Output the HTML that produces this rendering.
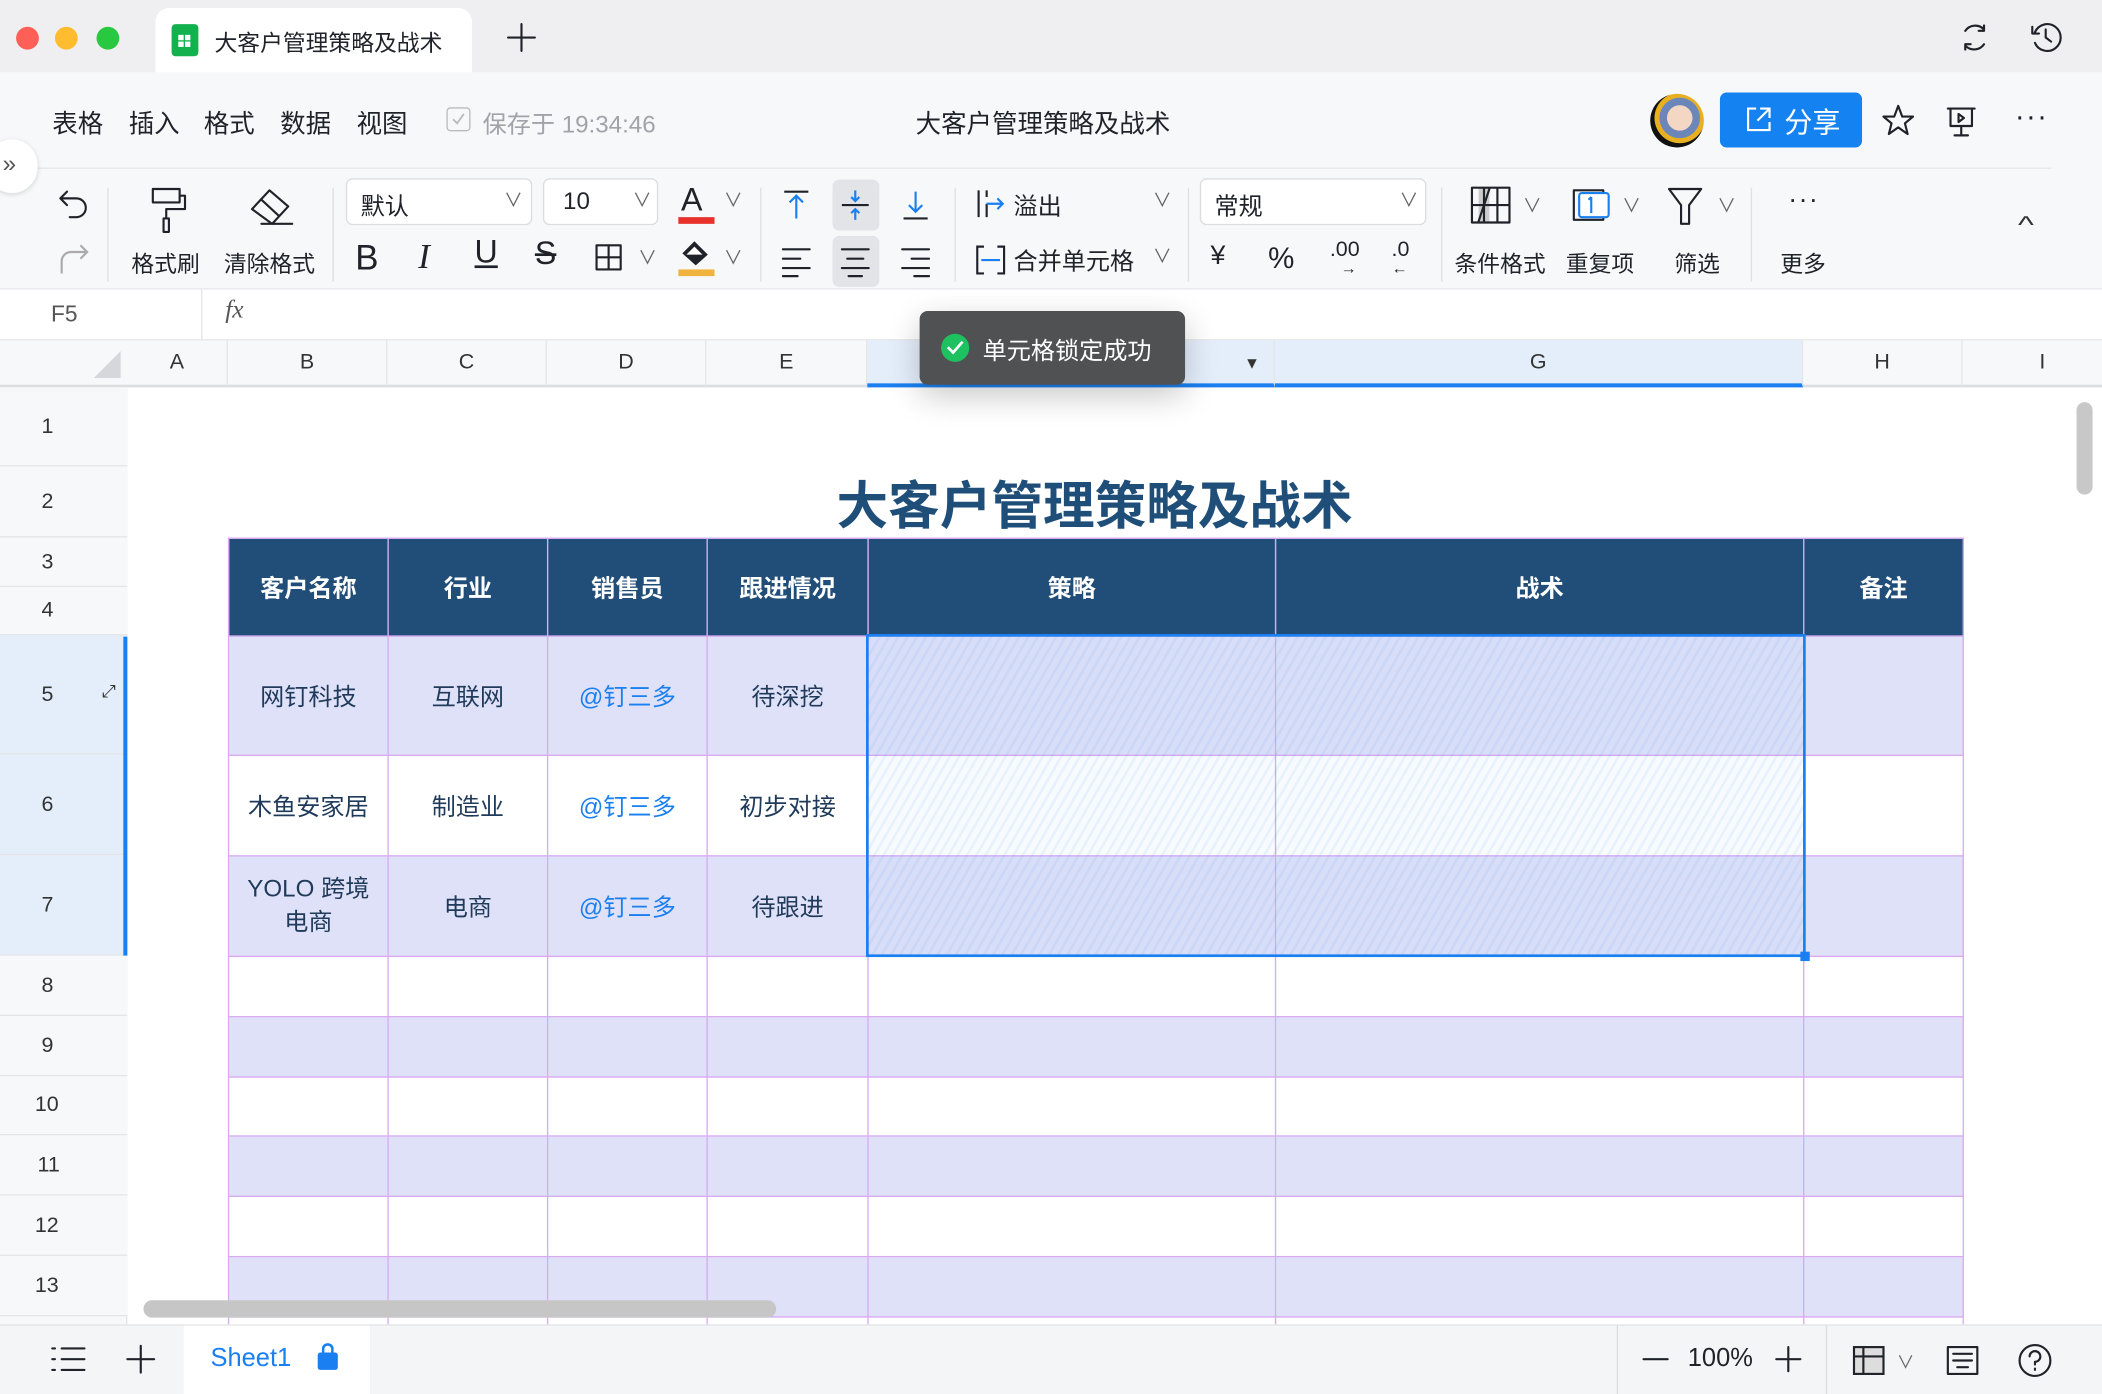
<!DOCTYPE html>
<html><head><meta charset="utf-8">
<style>
*{box-sizing:border-box;margin:0;padding:0}
html,body{width:2102px;height:1394px;overflow:hidden;background:#fff}
#w{position:absolute;left:0;top:0;width:1568px;height:1040px;transform:scale(1.34056,1.3404);transform-origin:0 0;font-family:"Liberation Sans","Noto Sans CJK SC",sans-serif;color:#1f2329;overflow:hidden;background:#fff}
.a{position:absolute}
.t{position:absolute;white-space:nowrap}
svg{position:absolute;overflow:visible}
.ic{fill:none;stroke:#1f2329;stroke-width:1.6;stroke-linecap:round;stroke-linejoin:round}
.ch{position:absolute;top:254px;height:34px;line-height:34px;text-align:center;font-size:16px;color:#333;border-right:1px solid #e4e5e8}
.rh{position:absolute;left:0;width:95px;font-size:16px;color:#333;padding-left:31px;border-bottom:1px solid #e4e5e8;background:#f7f8fa}
table{position:absolute;left:170px;top:401px;border-collapse:collapse;table-layout:fixed}
td{border:1px solid #d9aaf2;text-align:center;font-size:18px;color:#1f3a5a;padding:0}
tr.h td{background:#214e78;color:#fff;font-weight:bold}
tr.l td{background:#dfe1f8}
.b{color:#1a7ff0}
</style></head><body><div id="w">
<!-- title bar -->
<div class="a" style="left:0;top:0;width:1568px;height:54px;background:#efeff2"></div>
<div class="a" style="left:12px;top:20px;width:17px;height:17px;border-radius:50%;background:#fe5f57"></div>
<div class="a" style="left:41px;top:20px;width:17px;height:17px;border-radius:50%;background:#febc2e"></div>
<div class="a" style="left:72px;top:20px;width:17px;height:17px;border-radius:50%;background:#28c840"></div>
<div class="a" style="left:116px;top:6px;width:236px;height:48px;background:#fff;border-radius:10px 10px 0 0"></div>
<div class="a" style="left:128px;top:18px;width:20px;height:24px;background:#13b14d;border-radius:3px"></div>
<div class="a" style="left:133px;top:26px;width:4px;height:4px;background:#fff;box-shadow:5px 0 #fff,0 5px #fff,5px 5px #fff"></div>
<div class="t" style="left:160px;top:18px;font-size:17px">大客户管理策略及战术</div>
<svg style="left:378px;top:17px" width="22" height="22"><path class="ic" d="M11 1V21M1 11H21"/></svg>
<svg style="left:1462px;top:17px" width="22" height="22"><path class="ic" d="M4 6A9 9 0 0 1 18 5M18 16A9 9 0 0 1 4 17M18 2V6H14M4 20V16H8"/></svg>
<svg style="left:1514px;top:16px" width="24" height="24"><path class="ic" d="M4 8A10 10 0 1 1 4 16M2 4V9H7M12 6V12L16 15"/></svg>
<!-- menu row -->
<div class="a" style="left:0;top:54px;width:1568px;height:162px;background:#f7f8fa"></div>
<div class="t" style="left:39px;top:78px;font-size:19px;word-spacing:0">表格</div>
<div class="t" style="left:96px;top:78px;font-size:19px">插入</div>
<div class="t" style="left:152px;top:78px;font-size:19px">格式</div>
<div class="t" style="left:209px;top:78px;font-size:19px">数据</div>
<div class="t" style="left:266px;top:78px;font-size:19px">视图</div>
<div class="a" style="left:333px;top:80px;width:18px;height:18px;border:1.5px solid #bbb;border-radius:3px"></div>
<svg style="left:337px;top:84px" width="10" height="10"><path fill="none" stroke="#bbb" stroke-width="1.4" d="M1 5L4 8L9 1"/></svg>
<div class="t" style="left:360px;top:79px;font-size:18px;color:#a0a3a8">保存于 19:34:46</div>
<div class="t" style="left:683px;top:78px;font-size:19px">大客户管理策略及战术</div>
<div class="a" style="left:1231px;top:70px;width:40px;height:40px;border-radius:50%;background:radial-gradient(circle at 55% 45%,#f3d6c4 0 30%,#6b86b8 31% 48%,#e8b020 49% 60%,#111 61%)"></div>
<div class="a" style="left:1283px;top:69px;width:106px;height:41px;border-radius:5px;background:#1482f0"></div>
<svg style="left:1302px;top:79px" width="20" height="20"><path fill="none" stroke="#fff" stroke-width="1.6" d="M8 2H2V18H18V12M11 2H18V9M18 2L9 11"/></svg>
<div class="t" style="left:1331px;top:76px;font-size:21px;color:#fff">分享</div>
<svg style="left:1403px;top:77px" width="26" height="26"><path class="ic" d="M13 2L16 10H24L18 15L20 23L13 18L6 23L8 15L2 10H10Z"/></svg>
<svg style="left:1451px;top:79px" width="24" height="24"><path class="ic" d="M2 2H22M4 2V15H20V2M12 15V22M7 22H17M10 6L14 9L10 12Z"/></svg>
<div class="t" style="left:1503px;top:74px;font-size:22px;letter-spacing:1px">···</div>
<div class="a" style="left:24px;top:125px;width:1506px;height:1px;background:#e6e7ea"></div>
<div class="a" style="left:-10px;top:104px;width:38px;height:40px;border-radius:20px;background:#fff;box-shadow:0 1px 4px rgba(0,0,0,.15)"></div>
<div class="t" style="left:2px;top:112px;font-size:18px;color:#555">»</div>
<!-- toolbar -->
<svg style="left:42px;top:140px" width="26" height="24"><path class="ic" d="M8 3L3 8L8 13M3 8H15A7 7 0 0 1 15 22H10"/></svg>
<svg style="left:42px;top:180px" width="26" height="24"><path fill="none" stroke="#aaa" stroke-width="1.6" d="M18 3L23 8L18 13M23 8H11A7 7 0 0 0 4 15V24"/></svg>
<div class="a" style="left:80px;top:140px;width:1px;height:70px;background:#e0e0e3"></div>
<svg style="left:110px;top:137px" width="32" height="36"><path class="ic" d="M4 4H24V14H4Z M24 9H28V19H14V26M12 26H16V36H12Z"/></svg>
<svg style="left:185px;top:138px" width="36" height="32"><path class="ic" d="M3 18L16 4L30 16L18 29ZM10 11L23 23M10 29H33"/></svg>
<div class="t" style="left:98px;top:183px;font-size:17px">格式刷</div>
<div class="t" style="left:167px;top:183px;font-size:17px">清除格式</div>
<div class="a" style="left:248px;top:140px;width:1px;height:70px;background:#e0e0e3"></div>
<div class="a" style="left:258px;top:133px;width:139px;height:35px;background:#fff;border:1px solid #dcdde0;border-radius:5px"></div>
<div class="t" style="left:269px;top:140px;font-size:18px">默认</div>
<div class="t" style="left:376px;top:139px;font-size:14px;color:#666">∨</div>
<div class="a" style="left:405px;top:133px;width:86px;height:35px;background:#fff;border:1px solid #dcdde0;border-radius:5px"></div>
<div class="t" style="left:420px;top:140px;font-size:18px">10</div>
<div class="t" style="left:472px;top:139px;font-size:14px;color:#666">∨</div>
<div class="t" style="left:508px;top:136px;font-size:24px">A</div>
<div class="a" style="left:506px;top:162px;width:27px;height:5px;background:#e8312a"></div>
<div class="t" style="left:540px;top:139px;font-size:14px;color:#666">∨</div>
<div class="t" style="left:265px;top:177px;font-size:26px">B</div>
<div class="t" style="left:312px;top:177px;font-size:26px;font-style:italic;font-family:'Liberation Serif',serif">I</div>
<div class="t" style="left:354px;top:175px;font-size:24px;text-decoration:underline">U</div>
<div class="t" style="left:399px;top:176px;font-size:24px;text-decoration:line-through">S</div>
<svg style="left:444px;top:182px" width="20" height="20"><path class="ic" d="M1 1H19V19H1ZM10 1V19M1 10H19"/></svg>
<div class="t" style="left:476px;top:182px;font-size:14px;color:#666">∨</div>
<svg style="left:506px;top:178px" width="26" height="22"><path fill="#1f2329" d="M12 2L22 12L13 20L3 11Z"/><path fill="#fff" d="M12 6L18 12H6Z"/></svg>
<div class="a" style="left:506px;top:201px;width:27px;height:5px;background:#f0b43e"></div>
<div class="t" style="left:540px;top:182px;font-size:14px;color:#666">∨</div>
<div class="a" style="left:567px;top:140px;width:1px;height:70px;background:#e0e0e3"></div>
<svg style="left:583px;top:141px" width="22" height="24"><path fill="none" stroke="#1f2329" stroke-width="1.6" d="M2 2H20"/><path fill="none" stroke="#1a7ff0" stroke-width="1.6" d="M11 22V6M6 10L11 5L16 10"/></svg>
<div class="a" style="left:621px;top:134px;width:35px;height:38px;background:#e3e4e7;border-radius:5px"></div>
<svg style="left:627px;top:141px" width="22" height="24"><path fill="none" stroke="#1f2329" stroke-width="1.6" d="M1 12H21"/><path fill="none" stroke="#1a7ff0" stroke-width="1.6" d="M11 1V9M8 6L11 9L14 6M11 23V15M8 18L11 15L14 18"/></svg>
<svg style="left:672px;top:141px" width="22" height="24"><path fill="none" stroke="#1f2329" stroke-width="1.6" d="M2 22H20"/><path fill="none" stroke="#1a7ff0" stroke-width="1.6" d="M11 2V17M6 12L11 17L16 12"/></svg>
<svg style="left:583px;top:184px" width="22" height="20"><path class="ic" d="M1 2H21M1 9H14M1 16H21M1 22H12"/></svg>
<div class="a" style="left:621px;top:176px;width:35px;height:38px;background:#e3e4e7;border-radius:5px"></div>
<svg style="left:627px;top:184px" width="22" height="20"><path class="ic" d="M1 2H21M5 9H17M1 16H21M6 22H16"/></svg>
<svg style="left:672px;top:184px" width="22" height="20"><path class="ic" d="M1 2H21M8 9H21M1 16H21M10 22H21"/></svg>
<div class="a" style="left:712px;top:140px;width:1px;height:70px;background:#e0e0e3"></div>
<svg style="left:728px;top:141px" width="24" height="22"><path fill="none" stroke="#1f2329" stroke-width="1.6" d="M2 1V21M8 1V6M8 11V21"/><path fill="none" stroke="#1a7ff0" stroke-width="1.6" d="M8 11H20M16 7L20 11L16 15"/></svg>
<div class="t" style="left:756px;top:140px;font-size:18px">溢出</div>
<div class="t" style="left:860px;top:139px;font-size:14px;color:#666">∨</div>
<svg style="left:728px;top:183px" width="22" height="22"><path fill="none" stroke="#1f2329" stroke-width="1.6" d="M6 1H1V21H6M16 1H21V21H16"/><path fill="none" stroke="#1a7ff0" stroke-width="1.6" d="M4 11H18"/></svg>
<div class="t" style="left:756px;top:181px;font-size:18px">合并单元格</div>
<div class="t" style="left:860px;top:181px;font-size:14px;color:#666">∨</div>
<div class="a" style="left:886px;top:140px;width:1px;height:70px;background:#e0e0e3"></div>
<div class="a" style="left:895px;top:133px;width:169px;height:35px;background:#fff;border:1px solid #dcdde0;border-radius:5px"></div>
<div class="t" style="left:906px;top:140px;font-size:18px">常规</div>
<div class="t" style="left:1044px;top:139px;font-size:14px;color:#666">∨</div>
<div class="t" style="left:903px;top:180px;font-size:20px">¥</div>
<div class="t" style="left:946px;top:180px;font-size:22px">%</div>
<div class="t" style="left:992px;top:178px;font-size:16px">.00<br></div>
<div class="t" style="left:1000px;top:193px;font-size:12px">→</div>
<div class="t" style="left:1038px;top:178px;font-size:16px">.0</div>
<div class="t" style="left:1038px;top:193px;font-size:12px">←</div>
<div class="a" style="left:1075px;top:140px;width:1px;height:70px;background:#e0e0e3"></div>
<svg style="left:1097px;top:139px" width="30" height="28"><rect x="6" y="1" width="8" height="26" fill="#ccc"/><path class="ic" d="M1 1H29V27H1ZM10 1V27M20 1V27M1 14H29M14 2L6 26"/></svg>
<div class="t" style="left:1136px;top:143px;font-size:14px;color:#666">∨</div>
<svg style="left:1170px;top:138px" width="32" height="30"><path class="ic" d="M4 4H26V26H4Z"/><rect x="8" y="6" width="22" height="18" fill="#fff" stroke="#1a7ff0" stroke-width="1.6" rx="2"/><path fill="none" stroke="#1a7ff0" stroke-width="1.6" d="M17 9V21M15 11L17 9"/></svg>
<div class="t" style="left:1210px;top:143px;font-size:14px;color:#666">∨</div>
<svg style="left:1243px;top:139px" width="28" height="30"><path class="ic" d="M2 2H26L17 14V28H11V14Z"/></svg>
<div class="t" style="left:1281px;top:143px;font-size:14px;color:#666">∨</div>
<div class="t" style="left:1085px;top:183px;font-size:17px">条件格式</div>
<div class="t" style="left:1168px;top:183px;font-size:17px">重复项</div>
<div class="t" style="left:1249px;top:183px;font-size:17px">筛选</div>
<div class="a" style="left:1306px;top:140px;width:1px;height:70px;background:#e0e0e3"></div>
<div class="t" style="left:1334px;top:138px;font-size:20px;letter-spacing:1px">···</div>
<div class="t" style="left:1328px;top:183px;font-size:17px">更多</div>
<div class="t" style="left:1507px;top:158px;font-size:18px;color:#333;transform:scaleX(1.4)">^</div>
<!-- formula bar -->
<div class="a" style="left:0;top:215px;width:1568px;height:39px;background:#fff;border-top:1px solid #e6e7ea;border-bottom:1px solid #e6e7ea"></div>
<div class="t" style="left:38px;top:225px;font-size:17px;color:#555">F5</div>
<div class="a" style="left:150px;top:216px;width:1px;height:37px;background:#e6e7ea"></div>
<div class="t" style="left:168px;top:221px;font-size:19px;font-style:italic;font-family:'Liberation Serif',serif;color:#555">fx</div>
<!-- column headers -->
<div class="a" style="left:0;top:254px;width:1568px;height:35px;background:#f7f8fa;border-bottom:2px solid #dcdde0"></div>
<div class="a" style="left:70px;top:262px;width:0;height:0;border-left:20px solid transparent;border-bottom:20px solid #d6d7da"></div>
<div class="ch" style="left:95px;width:75px">A</div>
<div class="ch" style="left:170px;width:119px">B</div>
<div class="ch" style="left:289px;width:119px">C</div>
<div class="ch" style="left:408px;width:119px">D</div>
<div class="ch" style="left:527px;width:120px">E</div>
<div class="ch" style="left:647px;width:304px;background:#e4eefb;border-bottom:3px solid #1a7ff0;height:35px">F</div>
<div class="t" style="left:928px;top:264px;font-size:12px;color:#333">▼</div>
<div class="ch" style="left:951px;width:394px;background:#e4eefb;border-bottom:3px solid #1a7ff0;height:35px">G</div>
<div class="ch" style="left:1345px;width:119px">H</div>
<div class="ch" style="left:1464px;width:120px">I</div>
<!-- row headers -->
<div class="a" style="left:0;top:289px;width:95px;height:700px;background:#f7f8fa;border-right:1px solid #e4e5e8"></div>
<div class="rh" style="top:289px;height:59px;line-height:59px">1</div>
<div class="rh" style="top:348px;height:53px;line-height:53px">2</div>
<div class="rh" style="top:401px;height:37px;line-height:37px">3</div>
<div class="rh" style="top:438px;height:36px;line-height:36px">4</div>
<div class="rh" style="top:474px;height:89px;line-height:89px;background:#e4eefb">5</div>
<div class="rh" style="top:563px;height:75px;line-height:75px;background:#e4eefb">6</div>
<div class="rh" style="top:638px;height:75px;line-height:75px;background:#e4eefb">7</div>
<div class="a" style="left:92px;top:475px;width:3px;height:238px;background:#1a7ff0"></div>
<div class="t" style="left:76px;top:508px;font-size:13px;color:#333">⤢</div>
<div class="rh" style="top:713px;height:45px;line-height:45px">8</div>
<div class="rh" style="top:758px;height:45px;line-height:45px">9</div>
<div class="rh" style="top:803px;height:44px;line-height:44px;padding-left:26px">10</div>
<div class="rh" style="top:847px;height:45px;line-height:45px;padding-left:28px">11</div>
<div class="rh" style="top:892px;height:45px;line-height:45px;padding-left:26px">12</div>
<div class="rh" style="top:937px;height:45px;line-height:45px;padding-left:26px">13</div>
<!-- title -->
<div class="t" style="left:624px;top:347px;font-size:38.5px;font-weight:bold;color:#1f4e79">大客户管理策略及战术</div>
<!-- table -->
<table>
<colgroup><col style="width:119px"><col style="width:119px"><col style="width:119px"><col style="width:120px"><col style="width:304px"><col style="width:394px"><col style="width:119px"></colgroup>
<tr class="h" style="height:73px"><td>客户名称</td><td>行业</td><td>销售员</td><td>跟进情况</td><td>策略</td><td>战术</td><td>备注</td></tr>
<tr class="l" style="height:89px"><td>网钉科技</td><td>互联网</td><td class="b">@钉三多</td><td>待深挖</td><td></td><td></td><td></td></tr>
<tr style="height:75px"><td>木鱼安家居</td><td>制造业</td><td class="b">@钉三多</td><td>初步对接</td><td></td><td></td><td></td></tr>
<tr class="l" style="height:75px"><td style="line-height:25px">YOLO 跨境<br>电商</td><td>电商</td><td class="b">@钉三多</td><td>待跟进</td><td></td><td></td><td></td></tr>
<tr style="height:45px"><td></td><td></td><td></td><td></td><td></td><td></td><td></td></tr>
<tr class="l" style="height:45px"><td></td><td></td><td></td><td></td><td></td><td></td><td></td></tr>
<tr style="height:44px"><td></td><td></td><td></td><td></td><td></td><td></td><td></td></tr>
<tr class="l" style="height:45px"><td></td><td></td><td></td><td></td><td></td><td></td><td></td></tr>
<tr style="height:45px"><td></td><td></td><td></td><td></td><td></td><td></td><td></td></tr>
<tr class="l" style="height:45px"><td></td><td></td><td></td><td></td><td></td><td></td><td></td></tr>
<tr style="height:45px"><td></td><td></td><td></td><td></td><td></td><td></td><td></td></tr>
</table>
<!-- selection -->
<div class="a" style="left:646px;top:473px;width:701px;height:241px;border:2px solid #1a7ff0;background:repeating-linear-gradient(-60deg,rgba(26,127,240,.10) 0 2px,rgba(26,127,240,.03) 2px 6px)"></div>
<div class="a" style="left:1343px;top:710px;width:7px;height:7px;background:#1a7ff0"></div>
<!-- toast -->
<div class="a" style="left:686px;top:232px;width:198px;height:55px;background:#505153;border-radius:6px;box-shadow:0 8px 24px rgba(0,0,0,.22)"></div>
<div class="a" style="left:702px;top:249px;width:21px;height:21px;border-radius:50%;background:#1ec15f"></div>
<svg style="left:706px;top:254px" width="13" height="11"><path fill="none" stroke="#fff" stroke-width="2" d="M1 5L5 9L12 1"/></svg>
<div class="t" style="left:733px;top:248px;font-size:18px;color:#fff">单元格锁定成功</div>
<!-- scrollbars -->
<div class="a" style="left:1549px;top:300px;width:12px;height:69px;border-radius:6px;background:#c8c8c8"></div>
<div class="a" style="left:107px;top:970px;width:472px;height:13px;border-radius:7px;background:#c6c6c6"></div>
<!-- bottom bar -->
<div class="a" style="left:0;top:988px;width:1568px;height:52px;background:#f4f5f7;border-top:1px solid #e4e5e8"></div>
<svg style="left:38px;top:1004px" width="26" height="20"><path class="ic" d="M1 2H3M8 2H25M1 10H3M8 10H25M1 18H3M8 18H25"/></svg>
<svg style="left:94px;top:1003px" width="22" height="22"><path class="ic" d="M11 1V21M1 11H21"/></svg>
<div class="a" style="left:137px;top:989px;width:139px;height:51px;background:#fff"></div>
<div class="t" style="left:157px;top:1003px;font-size:19px;color:#1a7ff0">Sheet1</div>
<div class="a" style="left:237px;top:1009px;width:15px;height:13px;background:#1a7ff0;border-radius:2px"></div>
<div class="a" style="left:240px;top:1002px;width:9px;height:10px;border:2px solid #1a7ff0;border-bottom:none;border-radius:5px 5px 0 0"></div>
<div class="a" style="left:1206px;top:989px;width:1px;height:51px;background:#dcdde0"></div>
<svg style="left:1225px;top:1013px" width="20" height="2"><path class="ic" d="M1 1H19"/></svg>
<div class="t" style="left:1259px;top:1003px;font-size:19px">100%</div>
<svg style="left:1324px;top:1004px" width="20" height="20"><path class="ic" d="M10 1V19M1 10H19"/></svg>
<div class="a" style="left:1362px;top:989px;width:1px;height:51px;background:#dcdde0"></div>
<svg style="left:1382px;top:1004px" width="24" height="22"><rect x="1" y="1" width="22" height="20" fill="#ddd" stroke="#1f2329" stroke-width="1.6"/><path class="ic" d="M8 1V21M1 8H23"/></svg>
<div class="t" style="left:1415px;top:1006px;font-size:13px;color:#666">∨</div>
<svg style="left:1452px;top:1004px" width="24" height="22"><path class="ic" d="M1 1H23V21H1ZM5 6H19M5 11H19M8 16H16"/></svg>
<svg style="left:1505px;top:1002px" width="26" height="26"><circle cx="13" cy="13" r="11.5" class="ic"/><path class="ic" d="M9 10A4 4 0 1 1 13 14V16M13 19V20"/></svg>
</div></body></html>
